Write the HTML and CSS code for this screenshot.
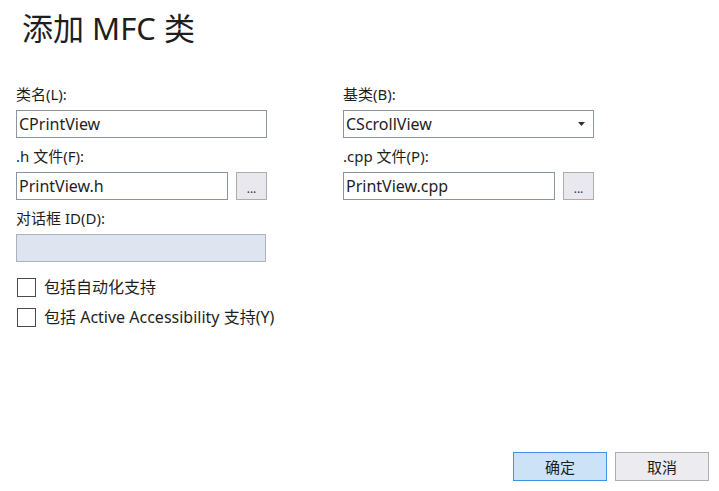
FILE: index.html
```html
<!DOCTYPE html>
<html lang="zh-CN">
<head>
    <meta charset="UTF-8">
    <title>添加 MFC 类</title>
    <link rel="stylesheet" href="styles.css">
</head>
<body>

<div class="dialog">
    <h1 class="title">添加 MFC 类</h1>

    <div class="fields">
        <div class="column">
            <label class="label">类名(L):</label>
            <input class="textbox" type="text" value="CPrintView">

            <label class="label">.h 文件(F):</label>
            <div class="file-row">
                <input class="textbox" type="text" value="PrintView.h">
                <button class="browse">...</button>
            </div>

            <label class="label">对话框 ID(D):</label>
            <input class="textbox disabled" type="text" disabled>

            <div class="checks">
                <label class="check"><span class="box"></span>包括自动化支持</label>
                <label class="check"><span class="box"></span>包括 Active Accessibility 支持(Y)</label>
            </div>
        </div>

        <div class="column">
            <label class="label">基类(B):</label>
            <div class="combo">
                <span>CScrollView</span>
                <svg width="7" height="4" viewBox="0 0 7 4"><path d="M0 0h7L3.5 4z" fill="#333"/></svg>
            </div>

            <label class="label">.cpp 文件(P):</label>
            <div class="file-row">
                <input class="textbox" type="text" value="PrintView.cpp">
                <button class="browse">...</button>
            </div>
        </div>
    </div>

    <div class="actions">
        <button class="action primary">确定</button>
        <button class="action">取消</button>
    </div>
</div>

</body>
</html>
```

FILE: styles.css
```css
body {
    margin: 0;
    background: white;
    color: #1e1e1e;
    font-family: "Noto Sans", "Noto Sans CJK SC", sans-serif;
    font-size: 15px;
}

.dialog {
    height: 491px;
    box-sizing: border-box;
    padding: 8px 10px 10px 16px;
    display: flex;
    flex-direction: column;
}

.title {
    margin: 0 0 0 6px;
    font-size: 31px;
    font-weight: normal;
    line-height: 40px;
    color: #1e1e1e;
}

.fields {
    margin-top: 36px;
    display: flex;
    gap: 76px;
}

.column {
    width: 251px;
    display: flex;
    flex-direction: column;
}

.label {
    line-height: 20px;
    margin-bottom: 6px;
}

.textbox {
    box-sizing: border-box;
    width: 100%;
    height: 28px;
    margin: 0 0 8px 0;
    padding: 0 2px;
    border: 1px solid #8a94a3;
    background: white;
    font-family: inherit;
    font-size: 16px;
    color: #1e1e1e;
    outline: none;
}

.textbox.disabled {
    width: 250px;
    background: #dee5f0;
    border-color: #a9b3c1;
}

.file-row {
    display: flex;
    gap: 8px;
}

.file-row .textbox {
    width: 212px;
}

.browse {
    box-sizing: border-box;
    width: 31px;
    height: 28px;
    padding: 4px 0 0 0;
    border: 1px solid #adadad;
    background: #e9e8ee;
    color: #333;
    font-family: inherit;
    font-size: 12px;
}

.combo {
    box-sizing: border-box;
    height: 28px;
    margin-bottom: 8px;
    padding: 0 8px 0 2px;
    border: 1px solid #8a94a3;
    display: flex;
    align-items: center;
    justify-content: space-between;
    font-size: 16px;
}

.checks {
    width: max-content;
    margin-top: 8px;
    display: flex;
    flex-direction: column;
    gap: 11px;
}

.check {
    display: flex;
    align-items: center;
    gap: 8px;
    line-height: 19px;
    font-size: 16px;
    white-space: nowrap;
}

.box {
    flex-shrink: 0;
    box-sizing: border-box;
    width: 19px;
    height: 19px;
    margin-left: 1px;
    border: 1px solid #4a4a4a;
    background: white;
}

.actions {
    margin-top: auto;
    display: flex;
    justify-content: flex-end;
    gap: 8px;
}

.action {
    box-sizing: border-box;
    width: 94px;
    height: 29px;
    border: 1px solid #adadad;
    background: #ebebf0;
    color: #1e1e1e;
    font-family: inherit;
    font-size: 15px;
}

.action.primary {
    background: #cce2f6;
    border-color: #3d94e5;
}
```
